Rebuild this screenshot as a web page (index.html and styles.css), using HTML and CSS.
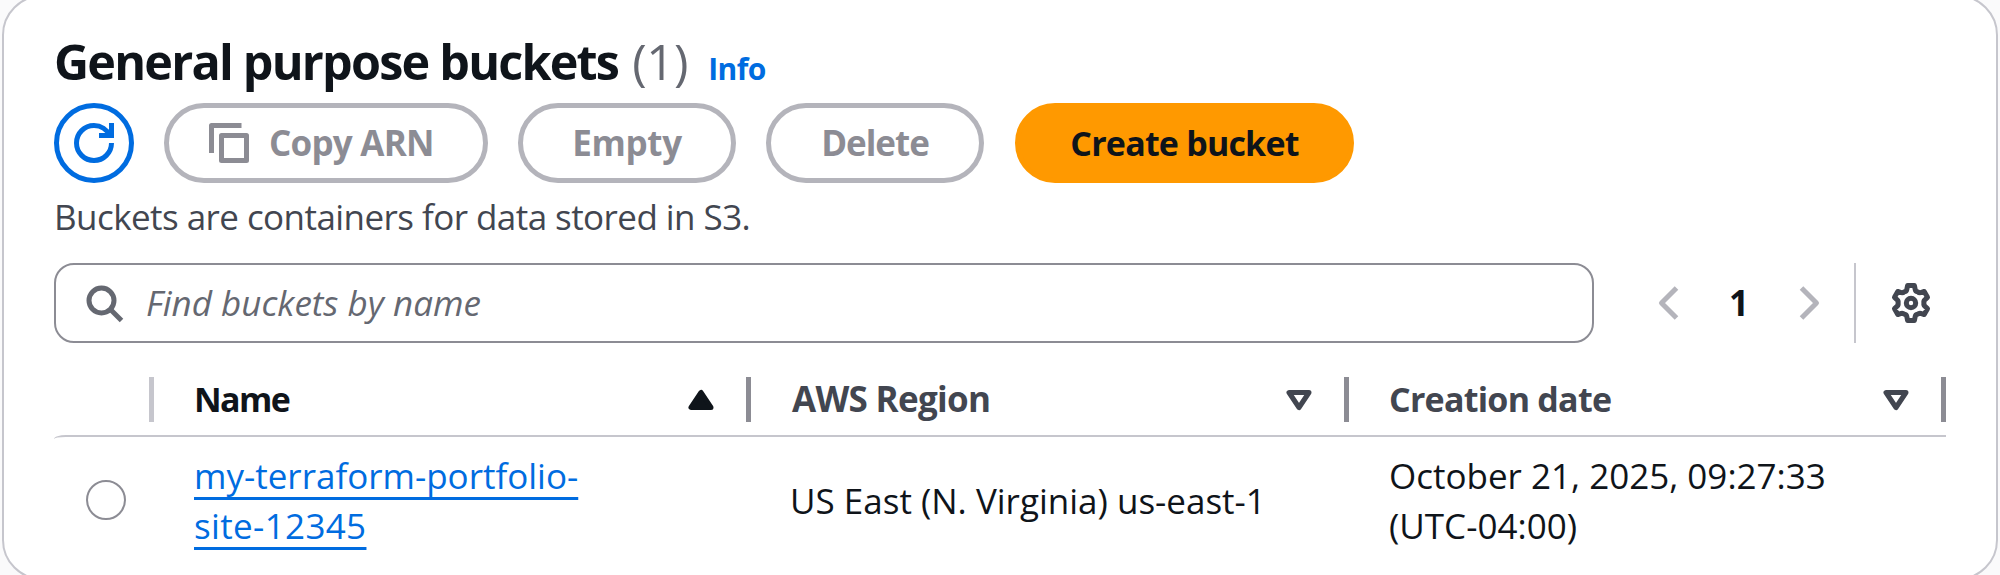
FILE: index.html
```
<!DOCTYPE html>
<html lang="en">
<head>
<meta charset="utf-8">
<title>General purpose buckets</title>
<link rel="stylesheet" href="styles.css">
</head>
<body>
<main class="card">
  <div class="heading">
    <h2 class="title">General purpose buckets</h2>
    <span class="counter">(1)</span>
    <a class="info">Info</a>
  </div>
  <div class="actions">
    <button class="btn btn-refresh" aria-label="Refresh">
      <svg class="icon" viewBox="0 0 16 16"><path d="M15 8c0 3.87-3.13 7-7 7s-7-3.13-7-7 3.13-7 7-7c2.79 0 5.2 1.63 6.33 4"/><path d="M10 5h5V0"/></svg>
    </button>
    <button class="btn btn-copy">
      <svg class="icon" viewBox="0 0 16 16"><path d="M5 5h10v10H5z" stroke-linejoin="round"/><path d="M1 12V1h12" stroke-linejoin="round"/></svg>
      <span>Copy ARN</span>
    </button>
    <button class="btn btn-empty">Empty</button>
    <button class="btn btn-delete">Delete</button>
    <button class="btn btn-primary">Create bucket</button>
  </div>
  <p class="description">Buckets are containers for data stored in S3.</p>
  <div class="tools">
    <div class="search">
      <svg class="icon" viewBox="0 0 16 16"><circle cx="7" cy="7" r="5"/><path d="m15 15-4.5-4.5"/></svg>
      <span class="placeholder">Find buckets by name</span>
    </div>
    <div class="pagination">
      <svg class="icon arrow" viewBox="0 0 16 16"><path d="M11 2 5 8l6 6" stroke-linejoin="round"/></svg>
      <span class="page">1</span>
      <svg class="icon arrow" viewBox="0 0 16 16"><path d="m5 2 6 6-6 6" stroke-linejoin="round"/></svg>
    </div>
    <div class="settings">
      <svg class="icon gear" viewBox="0 0 40 40"><path stroke-linejoin="round" d="M16.6 2.5h6.8l.8 3.9Q24.6 8.4 26.5 8.7 28 9.9 29.7 9.6L33.2 8.5 36.5 14.3 33.8 16.8Q32.4 18.2 33 20 32.4 21.8 33.8 23.2L36.5 25.7 33.2 31.5 29.7 30.4Q28 30.1 26.5 31.3 24.6 31.6 24.2 33.6L23.4 37.5h-6.8l-.8-3.9Q15.4 31.6 13.5 31.3 12 30.1 10.3 30.4L6.8 31.5 3.5 25.7 6.2 23.2Q7.6 21.8 7 20 7.6 18.2 6.2 16.8L3.5 14.3 6.8 8.5 10.3 9.6Q12 9.9 13.5 8.7 15.4 8.4 15.8 6.4z"/><circle cx="20" cy="20" r="4.7"/></svg>
    </div>
  </div>
  <div class="table">
    <div class="row head">
      <div class="th select"><i class="bar light"></i></div>
      <div class="th sorted"><span class="th-name">Name</span><svg class="icon" viewBox="0 0 16 16"><path class="solid" d="M4 11h8L8 5z" stroke-linejoin="round"/></svg><i class="bar"></i></div>
      <div class="th"><span class="th-region">AWS Region</span><svg class="icon" viewBox="0 0 16 16"><path d="M4 5h8l-4 6z" stroke-linejoin="round"/></svg><i class="bar"></i></div>
      <div class="th"><span class="th-date">Creation date</span><svg class="icon" viewBox="0 0 16 16"><path d="M4 5h8l-4 6z" stroke-linejoin="round"/></svg><i class="bar"></i></div>
    </div>
    <div class="row body">
      <div class="td pick"><i class="radio"></i></div>
      <div class="td"><a class="link">my-terraform-portfolio-<br><span class="link-end">site-12345</span></a></div>
      <div class="td region">US East (N. Virginia) us-east-1</div>
      <div class="td date">October 21, 2025, 09:27:33<br>(UTC-04:00)</div>
    </div>
  </div>
</main>
</body>
</html>
```
FILE: styles.css
```
* { box-sizing: border-box; }
html, body { height: 575px; overflow: hidden; }
body {
  margin: 0;
  background: #fafafb;
  color: #0f141a;
  font: 430 35px/50px "Open Sans", "Noto Sans", sans-serif;
}
.card {
  height: 585px;
  margin: -5px 2px 0;
  padding: 34px 50px 0;
  border: 2px solid #c6c6cd;
  border-radius: 40px;
  background: #fff;
  white-space: nowrap;
}
.icon { display: block; flex: none; width: 40px; height: 40px; fill: none; stroke: currentColor; stroke-width: 2; }

.heading { display: flex; align-items: baseline; height: 60px; line-height: 60px; }
.title { margin: 0; font-size: 48.5px; font-weight: 700; letter-spacing: -1.78px; }
.counter { margin-left: 14px; font-size: 49px; color: #656871; letter-spacing: -.3px; }
.info { margin-left: 20px; font-size: 30px; font-weight: 700; letter-spacing: -.6px; color: #006ce0; }

.actions { display: flex; gap: 30px; margin-top: 12px; }
.btn {
  display: flex; align-items: center; justify-content: center;
  height: 80px; padding: 0 0 1px; margin: 0;
  border: 5px solid #b4b4bb; border-radius: 40px;
  background: #fff; color: #8c8c94;
  font: 700 35px/50px "Open Sans", "Noto Sans", sans-serif;
}
.btn-refresh { width: 80px; padding: 0; border-color: #006ce0; color: #006ce0; }
.btn-copy { width: 324px; justify-content: flex-start; gap: 20px; padding: 0 0 0 40px; letter-spacing: -.77px; }
.btn-copy span { padding-bottom: 1px; }
.btn-empty { width: 218px; letter-spacing: -.33px; }
.btn-delete { width: 218px; letter-spacing: -1.03px; }
.btn-primary { width: 339px; margin-left: 1px; border-color: #f90; background: #f90; color: #0f141a; font-size: 34px; letter-spacing: -.8px; }

.description { margin: 9px 0 21px; color: #424650; letter-spacing: -.56px; }

.tools { display: flex; align-items: center; height: 80px; }
.search {
  display: flex; align-items: center; gap: 22px;
  width: 1540px; height: 80px; padding-left: 28px;
  border: 2px solid #8c8c94; border-radius: 20px;
  color: #656871;
}
.placeholder { padding-bottom: 1px; font-style: italic; }
.pagination { display: flex; align-items: center; margin-left: 55px; }
.arrow { color: #b4b4bb; }
.page { width: 100px; padding-bottom: 1px; text-align: center; font-weight: 700; }
.settings { display: flex; align-items: center; height: 80px; margin-left: 25px; padding-left: 35px; border-left: 2px solid #c6c6cd; color: #424650; }
.gear { stroke-width: 5; }

.table { margin-top: 20px; width: 1892px; }
.row { display: grid; grid-template-columns: 100px 597px 598px 597px; align-items: center; }
.head { height: 72px; font-weight: 700; color: #424650; }
.th { display: flex; align-items: center; padding-left: 40px; }
.th .icon { margin: 2px 25px 0 auto; }
.select { justify-content: flex-end; padding: 0; }
.sorted { color: #0f141a; }
.solid { fill: currentColor; }
.bar { width: 5px; height: 45px; margin-top: 1px; background: #8c8c94; }
.light { background: #c6c6cd; }
.th-name { font-size: 34px; letter-spacing: -1.6px; }
.th-region { margin-left: 1px; letter-spacing: -.7px; }
.th-date { font-size: 34px; letter-spacing: -.75px; }
.body { height: 128px; border-top: 2px solid #c6c6cd; border-top-left-radius: 12px 4px; }
.td { padding: 2px 0 0 40px; }
.pick { padding: 0 0 0 32px; }
.radio { display: block; width: 40px; height: 40px; border: 2px solid #8c8c94; border-radius: 50%; }
.link { color: #006ce0; text-decoration: underline 3px; text-underline-offset: 8px; text-decoration-skip-ink: none; }
.link-end { letter-spacing: .35px; }
.region { padding-left: 39px; }
```
